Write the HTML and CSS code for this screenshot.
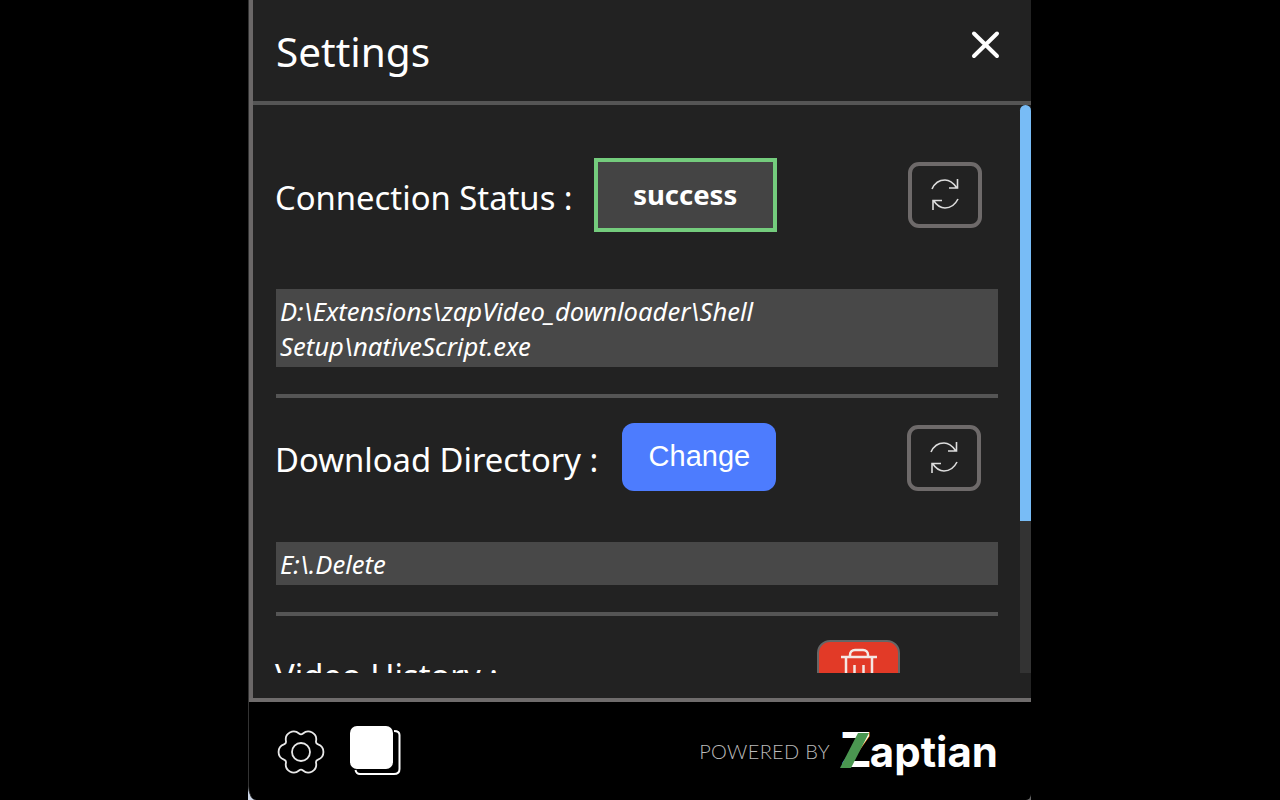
FILE: index.html
```html
<!DOCTYPE html>
<html lang="en">
<head>
<meta charset="utf-8">
<title>Settings</title>
<link rel="stylesheet" href="styles.css">
</head>
<body>
<div class="window">
  <div class="panel">
    <div class="main">
      <header class="header">
        <h1 class="title">Settings</h1>
        <svg class="close" width="30" height="30" viewBox="0 0 30 30"><path d="M4 3.500L27 26M27 3.500L4 26"/></svg>
      </header>
      <div class="scroller">
        <div class="content">
          <div class="row row-status">
            <span class="label">Connection Status :</span>
            <span class="status">success</span>
            <button class="refresh refresh-a">
              <svg width="30" height="36" viewBox="0 0 30 36"><path d="M2 12C4.500 6.500 9 3 15 3C19 3 23 5.500 26.500 10.500M27.500 2V11H19M28 22C25 28 20 31 15 31C10.500 31 6.500 28 3.500 23.500M3 33V23.500H12"/></svg>
            </button>
          </div>
          <div class="path path-status">D:\Extensions\zapVideo_downloader\Shell<br>Setup\nativeScript.exe</div>
          <div class="divider"></div>
          <div class="row row-dir">
            <span class="label">Download Directory :</span>
            <button class="change">Change</button>
            <button class="refresh refresh-b">
              <svg width="30" height="36" viewBox="0 0 30 36"><path d="M2 12C4.500 6.500 9 3 15 3C19 3 23 5.500 26.500 10.500M27.500 2V11H19M28 22C25 28 20 31 15 31C10.500 31 6.500 28 3.500 23.500M3 33V23.500H12"/></svg>
            </button>
          </div>
          <div class="path path-dir">E:\.Delete</div>
          <div class="divider"></div>
          <div class="row row-history">
            <span class="label">Video History :</span>
            <button class="trash">
              <svg width="38" height="44" viewBox="0 0 38 44"><path d="M1 9H37M10 9V7C10 4 12 2 15 2H23C26 2 28 4 28 7V9M6 9V38H32V9M14.500 17V32M23.500 17V32"/></svg>
            </button>
          </div>
        </div>
      </div>
      <div class="gap"></div>
    </div>
    <footer class="footer">
      <div class="tools">
        <svg class="gear" width="50" height="46" viewBox="-25 -23 50 46"><path d="M17.050 -7.560A8 8 0 0 1 17.050 7.560A3 3 0 0 0 15.070 10.990A8 8 0 0 1 1.980 18.540A3 3 0 0 0 -1.980 18.540A8 8 0 0 1 -15.070 10.990A3 3 0 0 0 -17.050 7.560A8 8 0 0 1 -17.050 -7.560A3 3 0 0 0 -15.070 -10.990A8 8 0 0 1 -1.980 -18.540A3 3 0 0 0 1.980 -18.540A8 8 0 0 1 15.070 -10.990A3 3 0 0 0 17.050 -7.560Z"/><circle r="9"/></svg>
        <svg class="stack" width="52" height="52" viewBox="0 0 52 52"><rect class="stack-front" x="1" y="1" width="43" height="43" rx="7"/><path class="stack-back" d="M45 6C49 6 50.500 7.500 50.500 10V44C50.500 47.500 49 49 45 49H11C8.500 49 7 47.500 6.500 45"/></svg>
      </div>
      <div class="brand">
        <span class="powered">POWERED BY</span>
        <span class="logo"><span class="logo-z">Z<svg class="logo-slash" width="30" height="36" viewBox="0 0 30 36"><polygon points="18,0 29,0 11,35 0,35"/></svg></span>aptian</span>
      </div>
    </footer>
  </div>
</div>
</body>
</html>
```

FILE: styles.css
```css
* {
  box-sizing: border-box;
}

html,
body {
  margin: 0;
  height: 100%;
  background: #000;
  overflow: hidden;
}

.window {
  width: 783px;
  height: 800px;
  margin-left: 248px;
  background: linear-gradient(to right, #cdd6e6 50%, #666 50%);
}

.panel {
  height: 800px;
  display: flex;
  flex-direction: column;
  background: #000;
  border-left: 1px solid #333;
  border-radius: 0 0 5px 8px / 0 0 6px 14px;
  overflow: hidden;
  font-family: "Noto Sans", "Open Sans", sans-serif;
  color: #fff;
}

.main {
  height: 698px;
  display: flex;
  flex-direction: column;
  background: #222;
  border-left: 4px solid #6b6868;
}

.header {
  height: 105px;
  flex: none;
  display: flex;
  justify-content: space-between;
  border-bottom: 4px solid #555;
  padding: 0 31px 0 23px;
}

.title {
  margin: 0;
  padding-top: 26px;
  font-size: 40.500px;
  font-weight: 400;
  line-height: 52px;
}

.close {
  margin-top: 30px;
}

.close path {
  fill: none;
  stroke: #fff;
  stroke-width: 4px;
  stroke-linecap: round;
}

.scroller {
  height: 568px;
  flex: none;
  overflow: hidden;
  position: relative;
}

.scroller::after {
  content: "";
  position: absolute;
  top: 0;
  right: 0;
  width: 11px;
  height: 568px;
  background: linear-gradient(#78bcf6 416px, #333 416px);
  border-radius: 6px 6px 0 0;
}

.content {
  padding: 53px 33px 0 23px;
}

.row {
  display: flex;
  align-items: center;
}

.row-status {
  height: 74px;
}

.row-dir {
  height: 68px;
  margin-top: 25px;
}

.row-history {
  height: 66px;
  margin-top: 24px;
}

.label {
  margin-left: -1px;
  padding-top: 6px;
  font-size: 32.800px;
  line-height: 42px;
}

.status {
  width: 183px;
  height: 74px;
  margin-left: 21px;
  display: flex;
  align-items: center;
  justify-content: center;
  padding-bottom: 1px;
  background: #444;
  border: 4px solid #74cc7d;
  font-size: 27.500px;
  font-weight: 700;
}

.refresh {
  width: 74px;
  height: 66px;
  padding: 0;
  display: flex;
  align-items: center;
  justify-content: center;
  background: transparent;
  border: 4px solid #6e6a6a;
  border-radius: 11px;
}

.refresh svg path,
.trash svg path {
  fill: none;
  stroke: #ddd;
  stroke-width: 1.600px;
}

.refresh-a {
  margin-left: auto;
  margin-right: 16px;
}

.refresh-b {
  margin-left: auto;
  margin-right: 17px;
  margin-top: 2px;
}

.change {
  width: 154px;
  height: 68px;
  margin-left: 24px;
  padding: 0 0 1px;
  background: #4d7cfe;
  border: 0;
  border-radius: 12px;
  color: #fff;
  font-family: "Liberation Sans", Arial, sans-serif;
  font-size: 29px;
}

.trash {
  width: 83px;
  height: 66px;
  margin-left: auto;
  margin-right: 98px;
  padding: 6px 0 0;
  display: flex;
  justify-content: center;
  background: #e23a27;
  border: 2px solid #666;
  border-radius: 13px;
}

.trash svg path {
  stroke: #f4e8e4;
  stroke-width: 2.500px;
}

.path {
  background: #484848;
  padding: 5px 4px;
  font-size: 25.600px;
  font-style: italic;
  line-height: 35px;
  color: #fff;
}

.path-status {
  margin-top: 57px;
  height: 78px;
}

.path-dir {
  margin-top: 51px;
  height: 43px;
}

.divider {
  height: 4px;
  margin-top: 27px;
  background: #555;
}

.gap {
  flex: 1;
}

.footer {
  flex: 1;
  display: flex;
  align-items: center;
  justify-content: space-between;
  padding: 0 33px 0 27px;
  border-top: 4px solid #6f6c6c;
}

.tools {
  display: flex;
  align-items: center;
  gap: 23px;
}

.gear {
  margin-top: 2px;
}

.gear path,
.gear circle {
  fill: none;
  stroke: #e8e8e8;
  stroke-width: 1.800px;
}

.stack-front {
  fill: #fff;
}

.stack-back {
  fill: none;
  stroke: #fff;
  stroke-width: 2px;
}

.brand {
  display: flex;
  align-items: center;
  gap: 10px;
}

.powered {
  font-family: Lato, sans-serif;
  font-weight: 300;
  font-size: 20px;
  letter-spacing: 0.300px;
  color: #bbb;
}

.logo {
  font-family: Inter, sans-serif;
  font-weight: 700;
  font-size: 42px;
  line-height: 52px;
  color: #fff;
}

.logo-z {
  position: relative;
  display: inline-block;
  font-size: 48px;
  letter-spacing: -2px;
}

.logo-slash {
  position: absolute;
  left: 0;
  top: 9px;
}

.logo-slash polygon {
  fill: #4a9650;
}
```
